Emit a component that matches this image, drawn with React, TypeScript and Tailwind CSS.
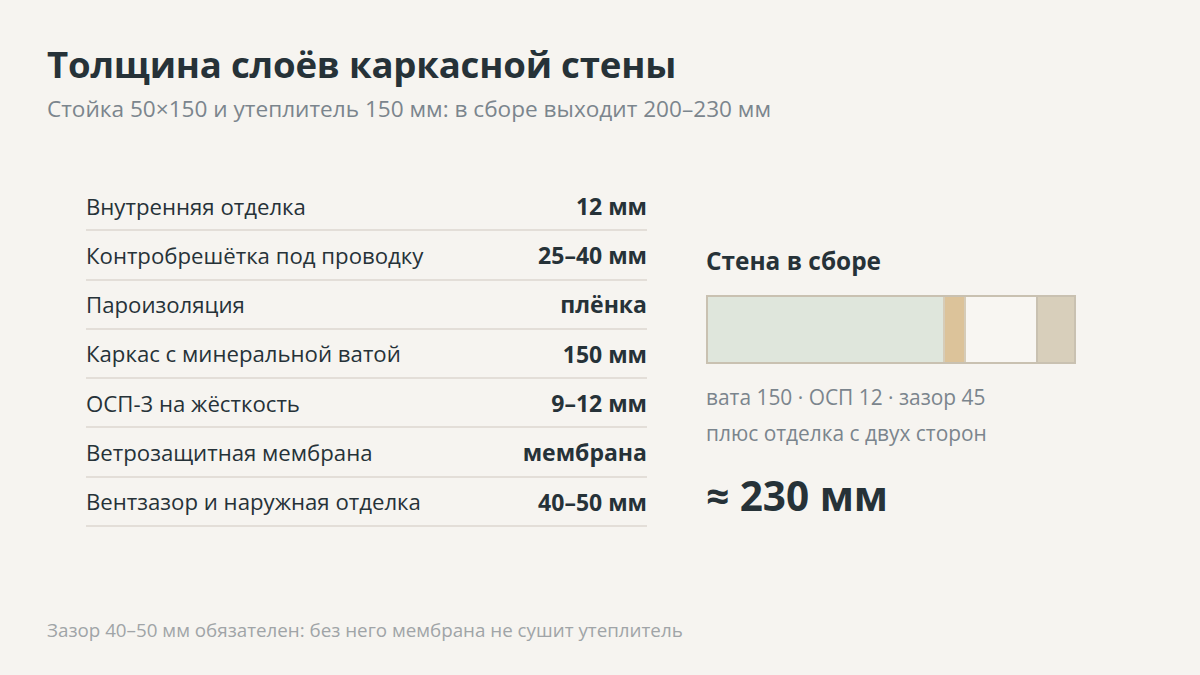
const rows = [
  { label: 'Внутренняя отделка', value: '12 мм' },
  { label: 'Контробрешётка под проводку', value: '25–40 мм' },
  { label: 'Пароизоляция', value: 'плёнка' },
  { label: 'Каркас с минеральной ватой', value: '150 мм' },
  { label: 'ОСП-3 на жёсткость', value: '9–12 мм' },
  { label: 'Ветрозащитная мембрана', value: 'мембрана' },
  { label: 'Вентзазор и наружная отделка', value: '40–50 мм' },
];

export default function App() {
  return (
    <div
      className="flex h-[675px] w-[1200px] flex-col bg-[#f6f4f0] px-[47px] pt-[40px] text-[#263238]"
      style={{ fontFamily: '"Open Sans", "Noto Sans", sans-serif' }}
    >
      <h1 className="text-[36.6px] font-bold leading-[48px] tracking-[-0.2px]">Толщина слоёв каркасной стены</h1>
      <p className="mt-[6px] text-[22.6px] leading-[30px] text-[#7b858d]">
        Стойка 50×150 и утеплитель 150 мм: в сборе выходит 200–230 мм
      </p>

      <div className="mt-[58px] flex items-start">
        <div className="ml-[39px] w-[561px]">
          {rows.map((r) => (
            <div
              key={r.label}
              className="flex h-[49.3px] items-center justify-between border-b-2 border-[#e3ded8] pt-[1px] text-[22.2px]"
            >
              <span>{r.label}</span>
              <span className="text-[23px] font-bold">{r.value}</span>
            </div>
          ))}
        </div>

        <div className="ml-[59px] mt-[63px] flex w-[370px] flex-col">
          <h2 className="text-[24.4px] font-bold leading-[32px]">Стена в сборе</h2>
          <div className="mt-[18px] flex h-[69px] border-2 border-[#c9c1b1]">
            <div className="grow-[150] bg-[#dfe6dc]" />
            <div className="grow-[12] border-l-2 border-[#d6ccb8] bg-[#dcc39a]" />
            <div className="grow-[45] border-l-2 border-[#d6ccb8] bg-[#f8f6f2]" />
            <div className="grow-[23] border-l-2 border-[#c9c1b1] bg-[#d8cfbb]" />
          </div>
          <p className="mt-[15px] text-[20.9px] leading-[36px] text-[#7b858d]">
            вата 150 · ОСП 12 · зазор 45
            <br />
            плюс отделка с двух сторон
          </p>
          <p className="mt-[19px] text-[40.5px] font-bold leading-[52px]">≈ 230 мм</p>
        </div>
      </div>

      <p className="mt-auto mb-[31px] text-[18.8px] leading-[28px] text-[#a0a4a7]">
        Зазор 40–50 мм обязателен: без него мембрана не сушит утеплитель
      </p>
    </div>
  );
}
